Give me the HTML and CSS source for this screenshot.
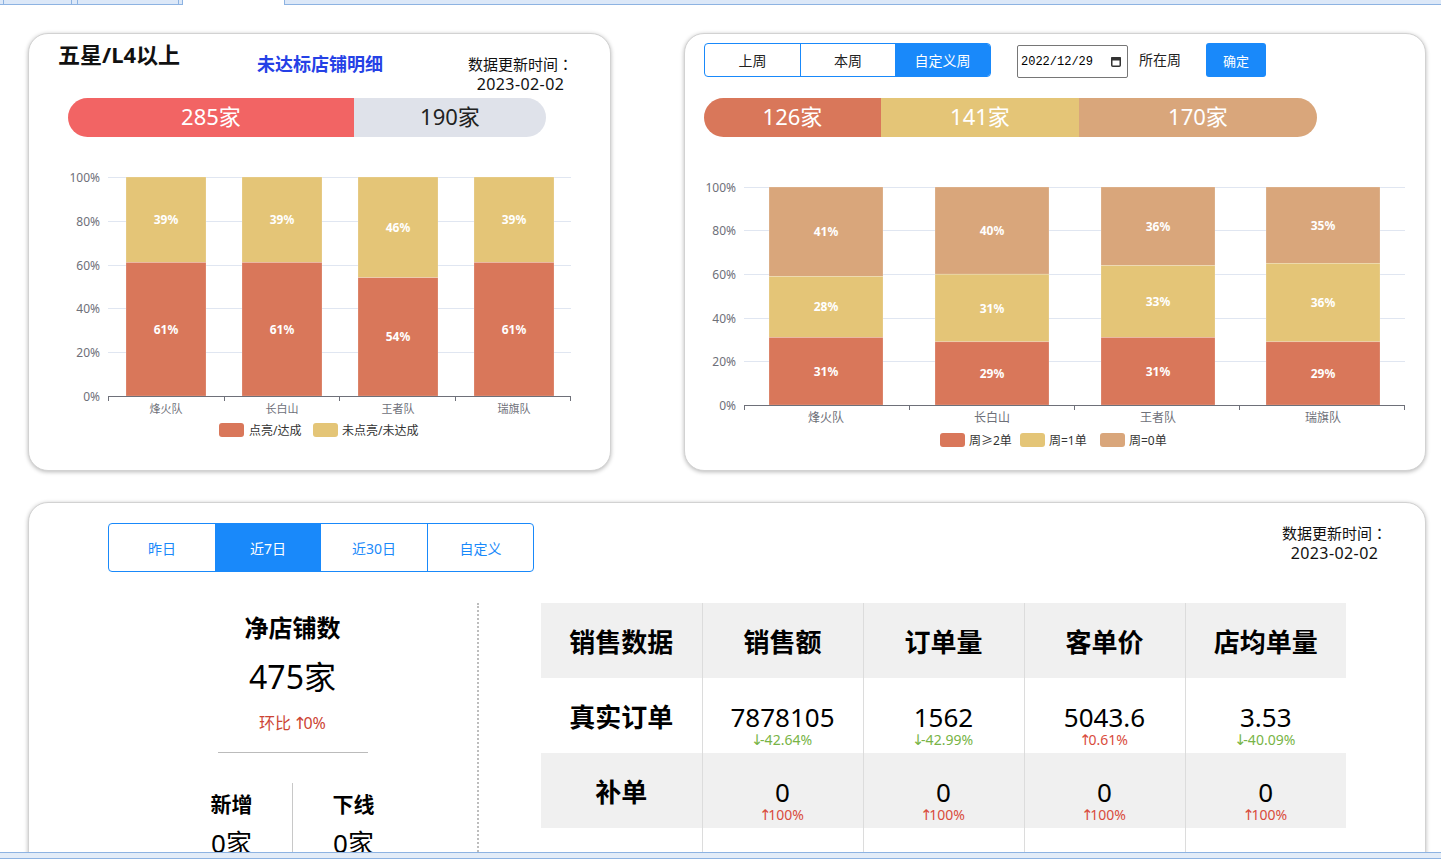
FILE: index.html
```html
<!DOCTYPE html>
<html lang="zh-CN">
<head>
<meta charset="utf-8">
<title>店铺数据看板</title>
<link rel="stylesheet" href="styles.css">
</head>
<body>
<div class="tabstrip">
  <div class="tab tab-w4"></div>
  <div class="tab tab-w68"></div>
  <div class="tab tab-w6"></div>
  <div class="tab tab-w101"></div>
  <div class="tab tab-w4"></div>
  <div class="tab-gap"></div>
  <div class="tab tab-rest"></div>
</div>

<main class="page">
  <div class="row">
    <section class="card card-a">
      <div class="card-head">
        <h2 class="title">五星/L4以上</h2>
        <a class="detail-link">未达标店铺明细</a>
        <div class="update">数据更新时间<span class="colon" lang="zh-TW">：</span><br><span class="date">2023-02-02</span></div>
      </div>
      <div class="pill pill-a">
        <div class="seg seg-red" style="width:286px">285家</div>
        <div class="seg seg-gray">190家</div>
      </div>
      <svg class="chart" width="581" height="290" viewBox="0 0 581 290">
        <g class="gridlines">
          <line x1="79" y1="17.5" x2="542" y2="17.5"/>
          <line x1="79" y1="61.5" x2="542" y2="61.5"/>
          <line x1="79" y1="105.5" x2="542" y2="105.5"/>
          <line x1="79" y1="148.5" x2="542" y2="148.5"/>
          <line x1="79" y1="192.5" x2="542" y2="192.5"/>
        </g>
        <g class="ylabels">
          <text x="71" y="17">100%</text>
          <text x="71" y="61">80%</text>
          <text x="71" y="105">60%</text>
          <text x="71" y="148">40%</text>
          <text x="71" y="192">20%</text>
          <text x="71" y="236">0%</text>
        </g>
        <g class="bars">
          <rect class="c-yel" x="97" y="17" width="80" height="85.4"/>
          <rect class="c-red" x="97" y="102.4" width="80" height="133.6"/>
          <rect class="c-yel" x="213" y="17" width="80" height="85.4"/>
          <rect class="c-red" x="213" y="102.4" width="80" height="133.6"/>
          <rect class="c-yel" x="329" y="17" width="80" height="100.7"/>
          <rect class="c-red" x="329" y="117.7" width="80" height="118.3"/>
          <rect class="c-yel" x="445" y="17" width="80" height="85.4"/>
          <rect class="c-red" x="445" y="102.4" width="80" height="133.6"/>
        </g>
        <g class="barlabels">
          <text x="137" y="59.7">39%</text>
          <text x="137" y="169.2">61%</text>
          <text x="253" y="59.7">39%</text>
          <text x="253" y="169.2">61%</text>
          <text x="369" y="67.4">46%</text>
          <text x="369" y="176.9">54%</text>
          <text x="485" y="59.7">39%</text>
          <text x="485" y="169.2">61%</text>
        </g>
        <g class="axis">
          <line x1="79" y1="236.5" x2="542" y2="236.5"/>
          <line x1="79.5" y1="236" x2="79.5" y2="241"/>
          <line x1="195.5" y1="236" x2="195.5" y2="241"/>
          <line x1="310.5" y1="236" x2="310.5" y2="241"/>
          <line x1="426.5" y1="236" x2="426.5" y2="241"/>
          <line x1="541.5" y1="236" x2="541.5" y2="241"/>
        </g>
        <g class="xlabels xlabels-sm">
          <text x="137" y="248">烽火队</text>
          <text x="253" y="248">长白山</text>
          <text x="369" y="248">王者队</text>
          <text x="485" y="248">瑞旗队</text>
        </g>
        <g class="legend">
          <rect class="c-red" x="190" y="263" width="25" height="14" rx="3"/>
          <text x="220" y="270">点亮/达成</text>
          <rect class="c-yel" x="284" y="263" width="25" height="14" rx="3"/>
          <text x="313" y="270">未点亮/未达成</text>
        </g>
      </svg>
    </section>

    <section class="card card-b">
      <div class="controls">
        <div class="seg-group seg-week">
          <span class="sg-btn">上周</span>
          <span class="sg-btn sg-sep">本周</span>
          <span class="sg-btn is-active">自定义周</span>
        </div>
        <div class="date-box">
          <span class="date-text">2022/12/29</span>
          <svg class="cal" width="10" height="11" viewBox="0 0 10 11">
            <rect x="0.75" y="1.75" width="8.5" height="8.5" rx="1" fill="none" stroke="#333" stroke-width="1.5"/>
            <rect x="0" y="1" width="10" height="3.5" rx="1" fill="#333"/>
          </svg>
        </div>
        <span class="week-label">所在周</span>
        <span class="btn-ok">确定</span>
      </div>
      <div class="pill pill-b">
        <div class="seg c-bg-red" style="width:177px">126家</div>
        <div class="seg c-bg-yel" style="width:198px">141家</div>
        <div class="seg c-bg-tan seg-fill">170家</div>
      </div>
      <svg class="chart chart-b" width="740" height="290" viewBox="0 0 740 290">
        <g class="gridlines">
          <line x1="59" y1="17.5" x2="720" y2="17.5"/>
          <line x1="59" y1="60.5" x2="720" y2="60.5"/>
          <line x1="59" y1="104.5" x2="720" y2="104.5"/>
          <line x1="59" y1="148.5" x2="720" y2="148.5"/>
          <line x1="59" y1="191.5" x2="720" y2="191.5"/>
        </g>
        <g class="ylabels">
          <text x="51" y="17">100%</text>
          <text x="51" y="60">80%</text>
          <text x="51" y="104">60%</text>
          <text x="51" y="148">40%</text>
          <text x="51" y="191">20%</text>
          <text x="51" y="235">0%</text>
        </g>
        <g class="bars">
          <rect class="c-tan" x="84" y="17" width="114" height="89.4"/>
          <rect class="c-yel" x="84" y="106.4" width="114" height="61"/>
          <rect class="c-red" x="84" y="167.4" width="114" height="67.6"/>

          <rect class="c-tan" x="250" y="17" width="114" height="87.2"/>
          <rect class="c-yel" x="250" y="104.2" width="114" height="67.6"/>
          <rect class="c-red" x="250" y="171.8" width="114" height="63.2"/>

          <rect class="c-tan" x="416" y="17" width="114" height="78.5"/>
          <rect class="c-yel" x="416" y="95.5" width="114" height="71.9"/>
          <rect class="c-red" x="416" y="167.4" width="114" height="67.6"/>

          <rect class="c-tan" x="581" y="17" width="114" height="76.3"/>
          <rect class="c-yel" x="581" y="93.3" width="114" height="78.5"/>
          <rect class="c-red" x="581" y="171.8" width="114" height="63.2"/>
        </g>
        <g class="barlabels">
          <text x="141" y="61.7">41%</text>
          <text x="141" y="136.9">28%</text>
          <text x="141" y="201.2">31%</text>
          <text x="307" y="60.6">40%</text>
          <text x="307" y="138">31%</text>
          <text x="307" y="203.4">29%</text>
          <text x="473" y="56.2">36%</text>
          <text x="473" y="131.4">33%</text>
          <text x="473" y="201.2">31%</text>
          <text x="638" y="55.2">35%</text>
          <text x="638" y="132.5">36%</text>
          <text x="638" y="203.4">29%</text>
        </g>
        <g class="axis">
          <line x1="59" y1="235.5" x2="720" y2="235.5"/>
          <line x1="59.5" y1="235" x2="59.5" y2="240"/>
          <line x1="224.5" y1="235" x2="224.5" y2="240"/>
          <line x1="389.5" y1="235" x2="389.5" y2="240"/>
          <line x1="554.5" y1="235" x2="554.5" y2="240"/>
          <line x1="719.5" y1="235" x2="719.5" y2="240"/>
        </g>
        <g class="xlabels">
          <text x="141" y="247">烽火队</text>
          <text x="307" y="247">长白山</text>
          <text x="473" y="247">王者队</text>
          <text x="638" y="247">瑞旗队</text>
        </g>
        <g class="legend">
          <rect class="c-red" x="255" y="263" width="25" height="14" rx="3"/>
          <text x="284" y="270">周≥2单</text>
          <rect class="c-yel" x="335" y="263" width="25" height="14" rx="3"/>
          <text x="364" y="270">周=1单</text>
          <rect class="c-tan" x="415" y="263" width="25" height="14" rx="3"/>
          <text x="444" y="270">周=0单</text>
        </g>
      </svg>
    </section>
  </div>

  <section class="card card-c">
    <div class="c-top">
      <div class="seg-group seg-range">
        <span class="sg-btn">昨日</span>
        <span class="sg-btn is-active">近7日</span>
        <span class="sg-btn">近30日</span>
        <span class="sg-btn sg-sep">自定义</span>
      </div>
      <div class="update update-c">数据更新时间<span class="colon" lang="zh-TW">：</span><br><span class="date">2023-02-02</span></div>
    </div>
    <div class="c-body">
      <div class="stores">
        <div class="stores-title">净店铺数</div>
        <div class="stores-num">475家</div>
        <div class="stores-ratio">环比 <span class="arw">↑</span>0%</div>
        <div class="stores-rule"></div>
        <div class="stores-split">
          <div class="split-col">
            <div class="split-title">新增</div>
            <div class="split-num">0家</div>
          </div>
          <div class="split-col split-right">
            <div class="split-title">下线</div>
            <div class="split-num">0家</div>
          </div>
        </div>
      </div>
      <div class="sales">
        <table class="sales-table">
          <colgroup>
            <col class="col"><col class="col"><col class="col"><col class="col"><col class="col">
          </colgroup>
          <thead>
            <tr>
              <th>销售数据</th><th>销售额</th><th>订单量</th><th>客单价</th><th>店均单量</th>
            </tr>
          </thead>
          <tbody>
            <tr class="row-white">
              <td class="row-name">真实订单</td>
              <td><div class="val">7878105</div><div class="chg down"><span class="arw">↓</span>-42.64%</div></td>
              <td><div class="val">1562</div><div class="chg down"><span class="arw">↓</span>-42.99%</div></td>
              <td><div class="val">5043.6</div><div class="chg up"><span class="arw">↑</span>0.61%</div></td>
              <td><div class="val">3.53</div><div class="chg down"><span class="arw">↓</span>-40.09%</div></td>
            </tr>
            <tr class="row-gray">
              <td class="row-name">补单</td>
              <td><div class="val">0</div><div class="chg up"><span class="arw">↑</span>100%</div></td>
              <td><div class="val">0</div><div class="chg up"><span class="arw">↑</span>100%</div></td>
              <td><div class="val">0</div><div class="chg up"><span class="arw">↑</span>100%</div></td>
              <td><div class="val">0</div><div class="chg up"><span class="arw">↑</span>100%</div></td>
            </tr>
            <tr class="row-white">
              <td class="row-name"></td><td></td><td></td><td></td><td></td>
            </tr>
          </tbody>
        </table>
      </div>
    </div>
  </section>
</main>

<div class="bottombar"><div class="bottombar-strip"></div></div>
</body>
</html>
```

FILE: styles.css
```css
html, body {
  margin: 0;
  padding: 0;
}
body {
  width: 1441px;
  height: 865px;
  overflow: hidden;
  background: #fff;
  color: #000;
  font-family: "Noto Sans", "Noto Sans CJK SC", sans-serif;
}

/* top tab strip */
.tabstrip {
  display: flex;
  height: 5px;
}
.tab {
  box-sizing: border-box;
  height: 5px;
  background: #dce8f8;
  border-bottom: 1px solid #8db3e2;
  border-right: 1px solid #8db3e2;
}
.tab-w4 { width: 4px; }
.tab-w68 { width: 68px; }
.tab-w6 { width: 6px; }
.tab-w101 { width: 101px; }
.tab-gap { width: 101px; }
.tab-rest { flex: 1; border-left: 1px solid #8db3e2; border-right: none; }

/* page */
.page {
  padding: 28px 0 0 28px;
}
.row {
  display: flex;
  gap: 73px;
}
.card {
  box-sizing: border-box;
  background: #fff;
  border: 1px solid #d2d2d2;
  border-radius: 20px;
  box-shadow: 0 1px 4px rgba(0, 0, 0, 0.28);
}
.card-a { width: 583px; height: 438px; }
.card-b { width: 742px; height: 438px; }
.card-c { width: 1398px; height: 440px; margin-top: 31px; }

/* card A header */
.card-head {
  display: flex;
  align-items: flex-start;
  height: 64px;
  padding-left: 29px;
}
.title {
  width: 199px;
  margin: 7px 0 0;
  font-size: 22px;
  font-weight: 700;
  line-height: 26px;
  color: #111;
}
.detail-link {
  margin-top: 18px;
  font-size: 18px;
  font-weight: 700;
  line-height: 24px;
  color: #2541e6;
  cursor: pointer;
}
.update {
  margin-left: auto;
  margin-right: 37px;
  margin-top: 20px;
  text-align: center;
  font-family: "Noto Sans CJK SC", sans-serif;
  font-size: 15px;
  line-height: 20px;
  color: #111;
}
.update .colon {
  font-family: "Noto Sans CJK TC", "Noto Sans CJK SC", sans-serif;
}
.update .date {
  font-family: "Noto Sans", sans-serif;
  font-size: 16px;
  letter-spacing: 0.4px;
}

/* pill bars */
.pill {
  display: flex;
  height: 39px;
  border-radius: 20px;
  overflow: hidden;
}
.pill-a {
  width: 478px;
  margin-left: 39px;
}
.pill-b {
  width: 613px;
  margin: 21px 0 0 19px;
}
.seg {
  display: flex;
  align-items: center;
  justify-content: center;
  font-size: 22px;
  line-height: 1;
  padding-bottom: 4px;
  box-sizing: border-box;
  color: #fff;
}
.seg-red { background: #f26464; }
.seg-gray { flex: 1; background: #dfe2ea; color: #222; }
.seg-fill { flex: 1; }
.c-bg-red { background: #d9775a; }
.c-bg-yel { background: #e4c577; }
.c-bg-tan { background: #d9a67b; }

/* charts */
.chart {
  display: block;
  margin-top: 23px;
}
.chart-b { margin-top: 33px; }
.chart text {
  font-family: "Noto Sans", "Noto Sans CJK SC", sans-serif;
  dominant-baseline: central;
}
.gridlines line { stroke: #e0e6f1; stroke-width: 1; }
.axis line { stroke: #6e7079; stroke-width: 1; }
.ylabels text { font-size: 12px; fill: #6e7079; text-anchor: end; }
.xlabels text { font-size: 12px; fill: #6e7079; text-anchor: middle; }
.xlabels-sm text { font-size: 11px; }
.barlabels text { font-size: 12px; font-weight: 700; fill: #fff; text-anchor: middle; }
.legend text { font-size: 12px; fill: #333; }
.c-red { fill: #d9775a; }
.c-yel { fill: #e4c577; }
.c-tan { fill: #d9a67b; }
.bars rect { stroke: rgba(255, 255, 255, 0.35); stroke-width: 0.6; }

/* segmented buttons */
.seg-group {
  box-sizing: border-box;
  display: flex;
  border: 1px solid #1989fa;
  border-radius: 4px;
  overflow: hidden;
}
.sg-btn {
  box-sizing: border-box;
  display: flex;
  align-items: center;
  justify-content: center;
}
.sg-btn.is-active {
  background: #1989fa;
  color: #fff;
}
.seg-week {
  width: 287px;
  height: 34px;
}
.seg-week .sg-btn {
  width: 95px;
  font-size: 14px;
  color: #222;
}
.seg-week .sg-btn.is-active { color: #fff; }
.sg-sep { border-left: 1px solid #1989fa; }

.controls {
  display: flex;
  align-items: flex-start;
  height: 34px;
  padding: 9px 0 0 19px;
}
.date-box {
  box-sizing: border-box;
  display: flex;
  align-items: center;
  justify-content: space-between;
  width: 111px;
  height: 33px;
  margin: 2px 0 0 26px;
  padding: 0 6px 0 3px;
  border: 1px solid #767676;
  border-radius: 2px;
}
.date-text {
  font-family: "Liberation Mono", "DejaVu Sans Mono", monospace;
  font-size: 12px;
  color: #000;
}
.cal { display: block; }
.week-label {
  margin-left: 11px;
  font-size: 14px;
  line-height: 34px;
  color: #222;
}
.btn-ok {
  display: flex;
  align-items: center;
  justify-content: center;
  width: 60px;
  height: 34px;
  margin-left: 25px;
  background: #1989fa;
  border-radius: 3px;
  color: #fff;
  font-size: 13px;
}

/* card C */
.c-top {
  display: flex;
  align-items: flex-start;
  padding: 20px 0 0 79px;
}
.seg-range {
  width: 426px;
  height: 49px;
}
.seg-range .sg-btn {
  width: 106px;
  font-size: 14px;
  color: #1989fa;
}
.seg-range .sg-btn.is-active { color: #fff; }
.update-c {
  margin-top: 0;
  margin-right: 38px;
}

.c-body {
  display: flex;
  margin-top: 31px;
}
.stores {
  width: 369px;
  height: 300px;
  margin-left: 79px;
  border-right: 2px dotted #bdbdbd;
  display: flex;
  flex-direction: column;
  align-items: center;
}
.stores-title {
  margin-top: 9px;
  font-size: 24px;
  font-weight: 700;
  line-height: 32px;
}
.stores-num {
  margin-top: 11px;
  font-size: 32px;
  line-height: 44px;
}
.stores-ratio {
  margin-top: 13px;
  font-size: 16px;
  line-height: 22px;
  color: #cc4433;
}
.arw {
  display: inline-block;
  font-family: "DejaVu Sans", sans-serif;
  font-size: 1.05em;
  margin: 0 -0.2em 0 -0.15em;
}
.stores-rule {
  width: 150px;
  margin-top: 18px;
  border-top: 1px solid #bbb;
}
.stores-split {
  display: flex;
  margin-top: 30px;
}
.split-col {
  width: 121px;
  height: 120px;
  display: flex;
  flex-direction: column;
  align-items: center;
}
.split-right {
  border-left: 1px solid #c8c8c8;
}
.split-title {
  margin-top: 7px;
  font-size: 21px;
  font-weight: 700;
  line-height: 28px;
}
.split-num {
  margin-top: 8px;
  font-size: 26px;
  line-height: 34px;
}

.sales {
  padding-left: 62px;
}
.sales-table {
  width: 805px;
  border-collapse: collapse;
  table-layout: fixed;
}
.sales-table .col {
  width: 161px;
}
.sales-table th,
.sales-table td {
  padding: 0;
  text-align: center;
  border-left: 1px solid #dcdcdc;
}
.sales-table th:first-child,
.sales-table td:first-child {
  border-left: none;
}
.sales-table thead tr {
  height: 75px;
  background: #f0f0f0;
}
.sales-table th {
  font-size: 26px;
  font-weight: 700;
  vertical-align: middle;
}
.sales-table tbody tr {
  height: 75px;
}
.sales-table td {
  vertical-align: top;
  padding-top: 25px;
}
.row-gray { background: #f0f0f0; }
.row-white { background: #fff; }
.row-name {
  font-size: 26px;
  font-weight: 700;
  line-height: 28px;
}
.val {
  font-size: 26px;
  line-height: 28px;
}
.chg {
  font-size: 14px;
  line-height: 17px;
}
.down { color: #78b446; }
.up { color: #d94c3c; }

/* bottom strip */
.bottombar {
  position: fixed;
  left: 0;
  bottom: 0;
  width: 100%;
  height: 13px;
  background: #fff;
}
.bottombar-strip {
  box-sizing: border-box;
  height: 7px;
  background: #e2ecf8;
  border-top: 1px solid #8db3e2;
  border-bottom: 1px solid #8db3e2;
}
```
